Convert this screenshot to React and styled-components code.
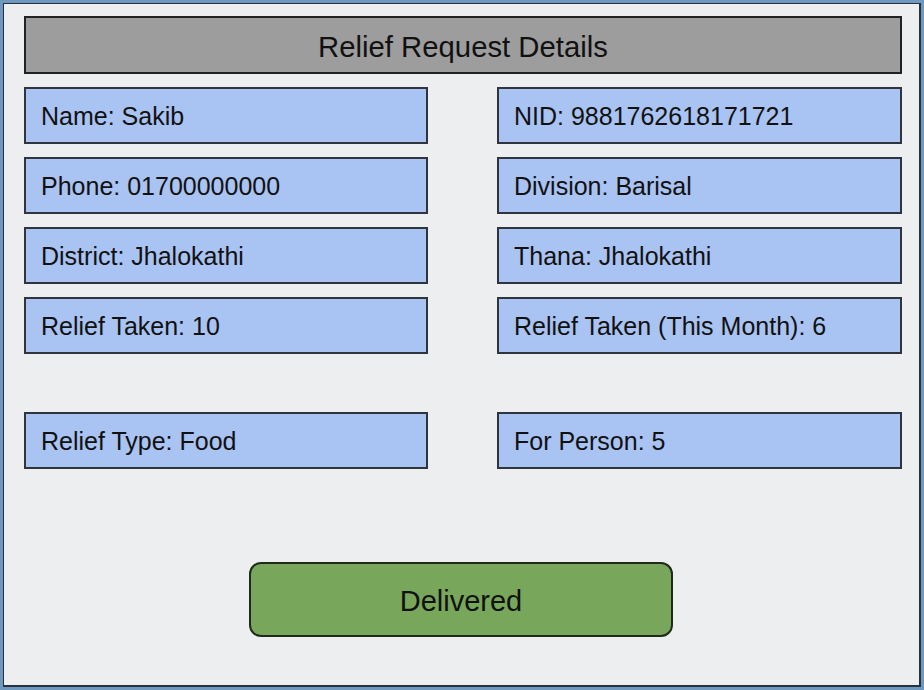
import React from "react";
import styled, { createGlobalStyle } from "styled-components";

const GlobalStyle = createGlobalStyle`
  html, body {
    margin: 0;
    padding: 0;
    background: #6f98bf;
  }

  body {
    font-family: "Liberation Sans", Arial, sans-serif;
    color: #111;
  }
`;

const Card = styled.div`
  box-sizing: border-box;
  margin: 3px 3px 0 3px;
  width: 918px;
  height: 684px;
  background: #eceef0;
  border: 1px solid #26323c;
  border-right-width: 2px;
  border-bottom-width: 2px;
  padding: 12px 17px 0 20px;
  display: flex;
  flex-direction: column;
`;

const Header = styled.div`
  box-sizing: border-box;
  height: 58px;
  background: #9d9d9d;
  border: 2px solid #222;
  display: flex;
  align-items: center;
  justify-content: center;
  padding-top: 3px;
  font-size: 29.3px;
`;

const Grid = styled.div`
  display: grid;
  grid-template-columns: 404px 405px;
  column-gap: 69px;
  row-gap: 13px;
  margin-top: 13px;
`;

const Spacer = styled.div`
  grid-column: 1 / -1;
  height: 32px;
`;

const Field = styled.div`
  box-sizing: border-box;
  height: 57px;
  background: #a9c3f3;
  border: 2px solid #30353d;
  display: flex;
  align-items: center;
  padding: 2px 0 0 15px;
  font-size: 25px;
`;

const Footer = styled.div`
  display: flex;
  justify-content: center;
  margin-top: 93px;
  padding-right: 4px;
`;

const Button = styled.button`
  box-sizing: border-box;
  width: 424px;
  height: 75px;
  background: #78a65a;
  border: 2px solid #1f2a1a;
  border-radius: 12px;
  padding-top: 4px;
  font-family: "Liberation Sans", Arial, sans-serif;
  font-size: 29px;
  color: #111;
  cursor: pointer;
`;

const details = [
  ["Name: Sakib", "NID: 9881762618171721"],
  ["Phone: 01700000000", "Division: Barisal"],
  ["District: Jhalokathi", "Thana: Jhalokathi"],
  ["Relief Taken: 10", "Relief Taken (This Month): 6"],
];

const extra = ["Relief Type: Food", "For Person: 5"];

const App = () => {
  return (
    <>
      <GlobalStyle />
      <Card>
        <Header>Relief Request Details</Header>
        <Grid>
          {details.map((row) =>
            row.map((text) => <Field key={text}>{text}</Field>)
          )}
          <Spacer />
          {extra.map((text) => (
            <Field key={text}>{text}</Field>
          ))}
        </Grid>
        <Footer>
          <Button>Delivered</Button>
        </Footer>
      </Card>
    </>
  );
};

export default App;
